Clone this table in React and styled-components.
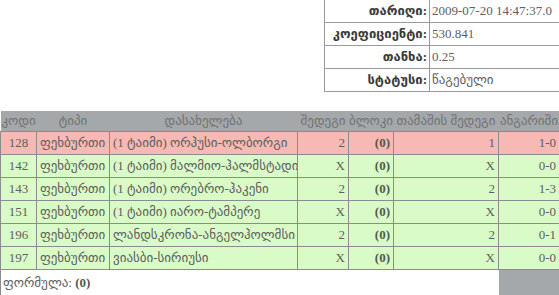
import React from "react";
import styled, { createGlobalStyle } from "styled-components";

const GlobalStyle = createGlobalStyle`
  body {
    margin: 0;
    background: #ffffff;
    font-family: "Liberation Serif", "DejaVu Sans", serif;
    color: #555;
  }
`;

const info = [
  { label: "თარიღი:", value: "2009-07-20 14:47:37.0" },
  { label: "კოეფიციენტი:", value: "530.841" },
  { label: "თანხა:", value: "0.25" },
  { label: "სტატუსი:", value: "წაგებული" },
];

const rows = [
  { code: 128, type: "ფეხბურთი", name: "(1 ტაიმი) ორჰუსი-ოლბორგი", res: "2", exact: "1", score: "1-0", lost: true },
  { code: 142, type: "ფეხბურთი", name: "(1 ტაიმი) მალმიო-ჰალმსტადი", res: "X", exact: "X", score: "0-0" },
  { code: 143, type: "ფეხბურთი", name: "(1 ტაიმი) ორებრო-ჰაკენი", res: "2", exact: "2", score: "1-3" },
  { code: 151, type: "ფეხბურთი", name: "(1 ტაიმი) იარო-ტამპერე", res: "X", exact: "X", score: "0-0" },
  { code: 196, type: "ფეხბურთი", name: "ლანდსკრონა-ანგელჰოლმსი", res: "2", exact: "2", score: "0-1" },
  { code: 197, type: "ფეხბურთი", name: "ვიასბი-სირიუსი", res: "X", exact: "X", score: "0-0" },
];

const App = () => {
  return (
    <Page>
      <GlobalStyle />
      <InfoTable>
        <tbody>
          {info.map((i) => (
            <tr key={i.label}>
              <InfoLabel>{i.label}</InfoLabel>
              <InfoValue>{i.value}</InfoValue>
            </tr>
          ))}
        </tbody>
      </InfoTable>

      <BetTable>
        <colgroup>
          <col style={{ width: 36 }} />
          <col style={{ width: 73 }} />
          <col style={{ width: 188 }} />
          <col style={{ width: 51 }} />
          <col style={{ width: 45 }} />
          <col style={{ width: 105 }} />
          <col style={{ width: 61 }} />
        </colgroup>
        <thead>
          <tr>
            <Head>კოდი</Head>
            <Head>ტიპი</Head>
            <Head>დასახელება</Head>
            <Head>შედეგი</Head>
            <Head>ბლოკი</Head>
            <Head>თამაშის შედეგი</Head>
            <Head>ანგარიში</Head>
          </tr>
        </thead>
        <tbody>
          {rows.map((r) => (
            <Row key={r.code} lost={r.lost}>
              <Cell align="center">{r.code}</Cell>
              <Cell>{r.type}</Cell>
              <Cell>{r.name}</Cell>
              <Cell align="right">{r.res}</Cell>
              <Cell align="right">
                <Bold>(0)</Bold>
              </Cell>
              <Cell align="right">{r.exact}</Cell>
              <Cell align="right">{r.score}</Cell>
            </Row>
          ))}
          <tr>
            <Formula colSpan={6}>
              ფორმულა: <Bold>(0)</Bold>
            </Formula>
            <GrayCell />
          </tr>
        </tbody>
      </BetTable>
    </Page>
  );
};

const Page = styled.div`
  width: 559px;
  height: 295px;
  overflow: hidden;
  display: flex;
  flex-direction: column;
`;

const InfoTable = styled.table`
  border-collapse: collapse;
  margin-left: 324px;
  width: 240px;
  flex-shrink: 0;
  font-size: 13px;
`;

const InfoLabel = styled.td`
  border: 1px solid #9a9a9a;
  border-top: none;
  text-align: right;
  font-weight: bold;
  color: #3a3a3a;
  height: 22px;
  padding: 0 2px;
  white-space: nowrap;
  width: 100px;
`;

const InfoValue = styled.td`
  border: 1px solid #9a9a9a;
  border-top: none;
  border-right: none;
  padding: 0 2px;
  color: #606060;
  white-space: nowrap;
`;

const BetTable = styled.table`
  border-collapse: collapse;
  table-layout: fixed;
  width: 559px;
  margin-top: 19px;
  flex-shrink: 0;
  font-size: 13px;
`;

const Head = styled.th`
  background: #a4a8ab;
  color: #727272;
  font-weight: normal;
  height: 20px;
  padding: 0;
  text-align: center;
  white-space: nowrap;
  overflow: visible;
`;

const Row = styled.tr`
  background: ${(p) => (p.lost ? "#f7b9b3" : "#d9fbc7")};
`;

const Cell = styled.td`
  border: 1px solid #8c8c8c;
  height: 22px;
  padding: 0 3px;
  text-align: ${(p) => p.align || "left"};
  color: #5e5e5e;
  white-space: nowrap;
  overflow: hidden;
`;

const Bold = styled.b`
  color: #4f5a4f;
`;

const Formula = styled.td`
  border-left: 1px solid #8c8c8c;
  height: 25px;
  padding: 0 2px;
  color: #5e5e5e;
  white-space: nowrap;
`;

const GrayCell = styled.td`
  background: #a4a8ab;
`;

export default App;
